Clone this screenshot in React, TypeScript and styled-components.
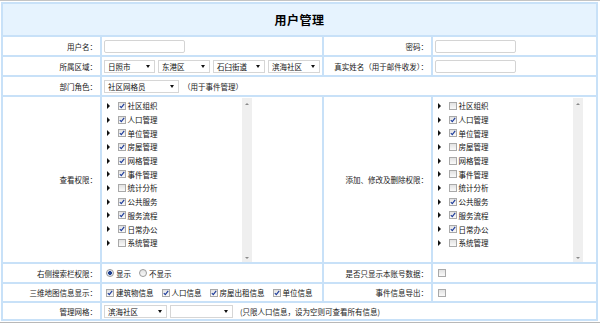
import React from 'react';
import styled, { createGlobalStyle } from 'styled-components';

const GlobalStyle = createGlobalStyle`
  html, body {
    margin: 0;
    padding: 0;
    background: #fff;
  }
  body {
    font-family: "Noto Sans CJK SC", "Liberation Sans", sans-serif;
    font-size: 7.5px;
    color: #111;
  }
`;

const Page = styled.div`
  width: 600px;
  height: 323px;
  box-sizing: border-box;
  border-top: 1px solid #c4c4c4;
  border-bottom: 1px solid #b8b8b8;
  padding: 1px 2px 0 1px;
  overflow: hidden;
`;

const Grid = styled.div`
  display: grid;
  grid-template-columns: 97px 220px 107px 163px;
  grid-template-rows: 31px 18px 18px 18px 165px 18px 17px 16px;
  gap: 2px;
  padding: 2px;
  width: fit-content;
  background: #c8e1f8;
`;

const TitleCell = styled.div`
  grid-column: 1 / -1;
  background: #e6f3fe;
  display: flex;
  align-items: center;
  justify-content: center;
  font-size: 12px;
  font-weight: bold;
  color: #000;
  letter-spacing: 0.5px;
`;

const Label = styled.div`
  background: #fff;
  display: flex;
  align-items: center;
  justify-content: flex-end;
  padding-right: 3px;
  color: #1a1a1a;
  white-space: nowrap;
`;

const Field = styled.div<{ $span?: number; $pad?: number }>`
  background: #fff;
  display: flex;
  align-items: center;
  gap: 3px;
  padding-left: ${p => p.$pad ?? 2}px;
  white-space: nowrap;
  grid-column: ${p => (p.$span ? `span ${p.$span}` : 'auto')};
`;

const TextBox = styled.div`
  width: 79px;
  height: 11px;
  border: 1px solid #d4d4d4;
  border-radius: 2px;
  background: #fff;
`;

const SelectBox = styled.div<{ $w: number }>`
  width: ${p => p.$w}px;
  height: 11px;
  box-sizing: content-box;
  border: 1px solid #d6d6d6;
  background: #fff;
  display: flex;
  align-items: center;
  justify-content: space-between;
  padding: 0 4px 0 3px;
  color: #111;
  line-height: 11px;
`;

const DownArrow = styled.span`
  width: 0;
  height: 0;
  border-left: 2.5px solid transparent;
  border-right: 2.5px solid transparent;
  border-top: 3px solid #111;
`;

const Note = styled.span<{ $gap?: number }>`
  color: #1a1a1a;
  margin-left: ${p => p.$gap ?? 1}px;
`;

const TreeCell = styled.div`
  background: #fff;
  padding-top: 1px;
`;

const TreeBox = styled.div`
  width: 150px;
  height: 164px;
  display: flex;
`;

const TreeList = styled.ul`
  flex: 1;
  list-style: none;
  margin: 0;
  padding: 1px 0 0 5px;
`;

const TreeItem = styled.li`
  height: 13.7px;
  display: flex;
  align-items: center;
  color: #111;
`;

const Expander = styled.span`
  width: 0;
  height: 0;
  border-top: 3px solid transparent;
  border-bottom: 3px solid transparent;
  border-left: 3.5px solid #111;
  margin-right: 7.5px;
`;

const Box = styled.span`
  width: 6px;
  height: 6px;
  border: 1px solid #a9a9a9;
  background: linear-gradient(#e2e2e2, #fafafa);
  display: inline-flex;
  align-items: center;
  justify-content: center;
  margin-right: 2px;
  flex-shrink: 0;
`;

const ScrollBar = styled.div`
  width: 10px;
  background: #efefef;
  display: flex;
  flex-direction: column;
  justify-content: space-between;
  align-items: center;
  padding: 5px 0 3px;
`;

const ScrollArrow = styled.span<{ $up?: boolean }>`
  width: 0;
  height: 0;
  border-left: 2px solid transparent;
  border-right: 2px solid transparent;
  ${p => (p.$up ? 'border-bottom: 2px solid #8a8a8a;' : 'border-top: 2px solid #8a8a8a;')}
`;

const Option = styled.label`
  display: inline-flex;
  align-items: center;
  margin-right: 5px;
  color: #111;
`;

const Radio = styled.span<{ $on: boolean }>`
  width: 6px;
  height: 6px;
  border-radius: 50%;
  border: 1px solid #9a9a9a;
  background: ${p =>
    p.$on ? 'radial-gradient(circle, #1e3f8f 0 1.6px, #dfe8f4 2.2px)' : 'linear-gradient(#e2e2e2, #fafafa)'};
  margin-right: 2px;
`;

const Check: React.FC<{ on: boolean }> = ({ on }) => (
  <Box>
    {on && (
      <svg width="6" height="6" viewBox="0 0 6 6">
        <path d="M0.8 3.1 L2.3 4.6 L5.2 0.9" fill="none" stroke="#1b3a9a" strokeWidth="1.1" />
      </svg>
    )}
  </Box>
);

const Select: React.FC<{ w: number; text?: string }> = ({ w, text }) => (
  <SelectBox $w={w}>
    <span>{text}</span>
    <DownArrow />
  </SelectBox>
);

const modules = ['社区组织', '人口管理', '单位管理', '房屋管理', '网格管理', '事件管理', '统计分析', '公共服务', '服务流程', '日常办公', '系统管理'];

const Tree: React.FC<{ checked: boolean[] }> = ({ checked }) => (
  <TreeCell>
    <TreeBox>
      <TreeList>
        {modules.map((m, i) => (
          <TreeItem key={m}>
            <Expander />
            <Check on={checked[i]} />
            {m}
          </TreeItem>
        ))}
      </TreeList>
      <ScrollBar>
        <ScrollArrow $up />
        <ScrollArrow />
      </ScrollBar>
    </TreeBox>
  </TreeCell>
);

const viewRights = [true, true, true, true, true, true, false, true, true, true, false];
const editRights = [false, true, true, false, false, false, false, true, true, true, false];

const App: React.FC = () => (
  <Page>
    <GlobalStyle />
    <Grid>
      <TitleCell>用户管理</TitleCell>

      <Label>用户名：</Label>
      <Field><TextBox /></Field>
      <Label>密码：</Label>
      <Field><TextBox /></Field>

      <Label>所属区域：</Label>
      <Field>
        <Select w={42} text="日照市" />
        <Select w={43} text="东港区" />
        <Select w={43} text="石臼街道" />
        <Select w={43} text="滨海社区" />
      </Field>
      <Label>真实姓名（用于邮件收发）：</Label>
      <Field><TextBox /></Field>

      <Label>部门角色：</Label>
      <Field $span={3}>
        <Select w={66} text="社区网格员" />
        <Note>（用于事件管理）</Note>
      </Field>

      <Label>查看权限：</Label>
      <Tree checked={viewRights} />
      <Label>添加、修改及删除权限：</Label>
      <Tree checked={editRights} />

      <Label>右侧搜索栏权限：</Label>
      <Field $pad={4}>
        <Option><Radio $on />显示</Option>
        <Option><Radio $on={false} />不显示</Option>
      </Field>
      <Label>是否只显示本账号数据：</Label>
      <Field $pad={5}><Check on={false} /></Field>

      <Label>三维地图信息显示：</Label>
      <Field $pad={4}>
        <Option><Check on />建筑物信息</Option>
        <Option><Check on />人口信息</Option>
        <Option><Check on />房屋出租信息</Option>
        <Option><Check on />单位信息</Option>
      </Field>
      <Label>事件信息导出：</Label>
      <Field $pad={5}><Check on={false} /></Field>

      <Label>管理网格：</Label>
      <Field $span={3}>
        <Select w={54} text="滨海社区" />
        <Select w={54} />
        <Note $gap={4}>(只限人口信息，设为空则可查看所有信息)</Note>
      </Field>
    </Grid>
  </Page>
);

export default App;
